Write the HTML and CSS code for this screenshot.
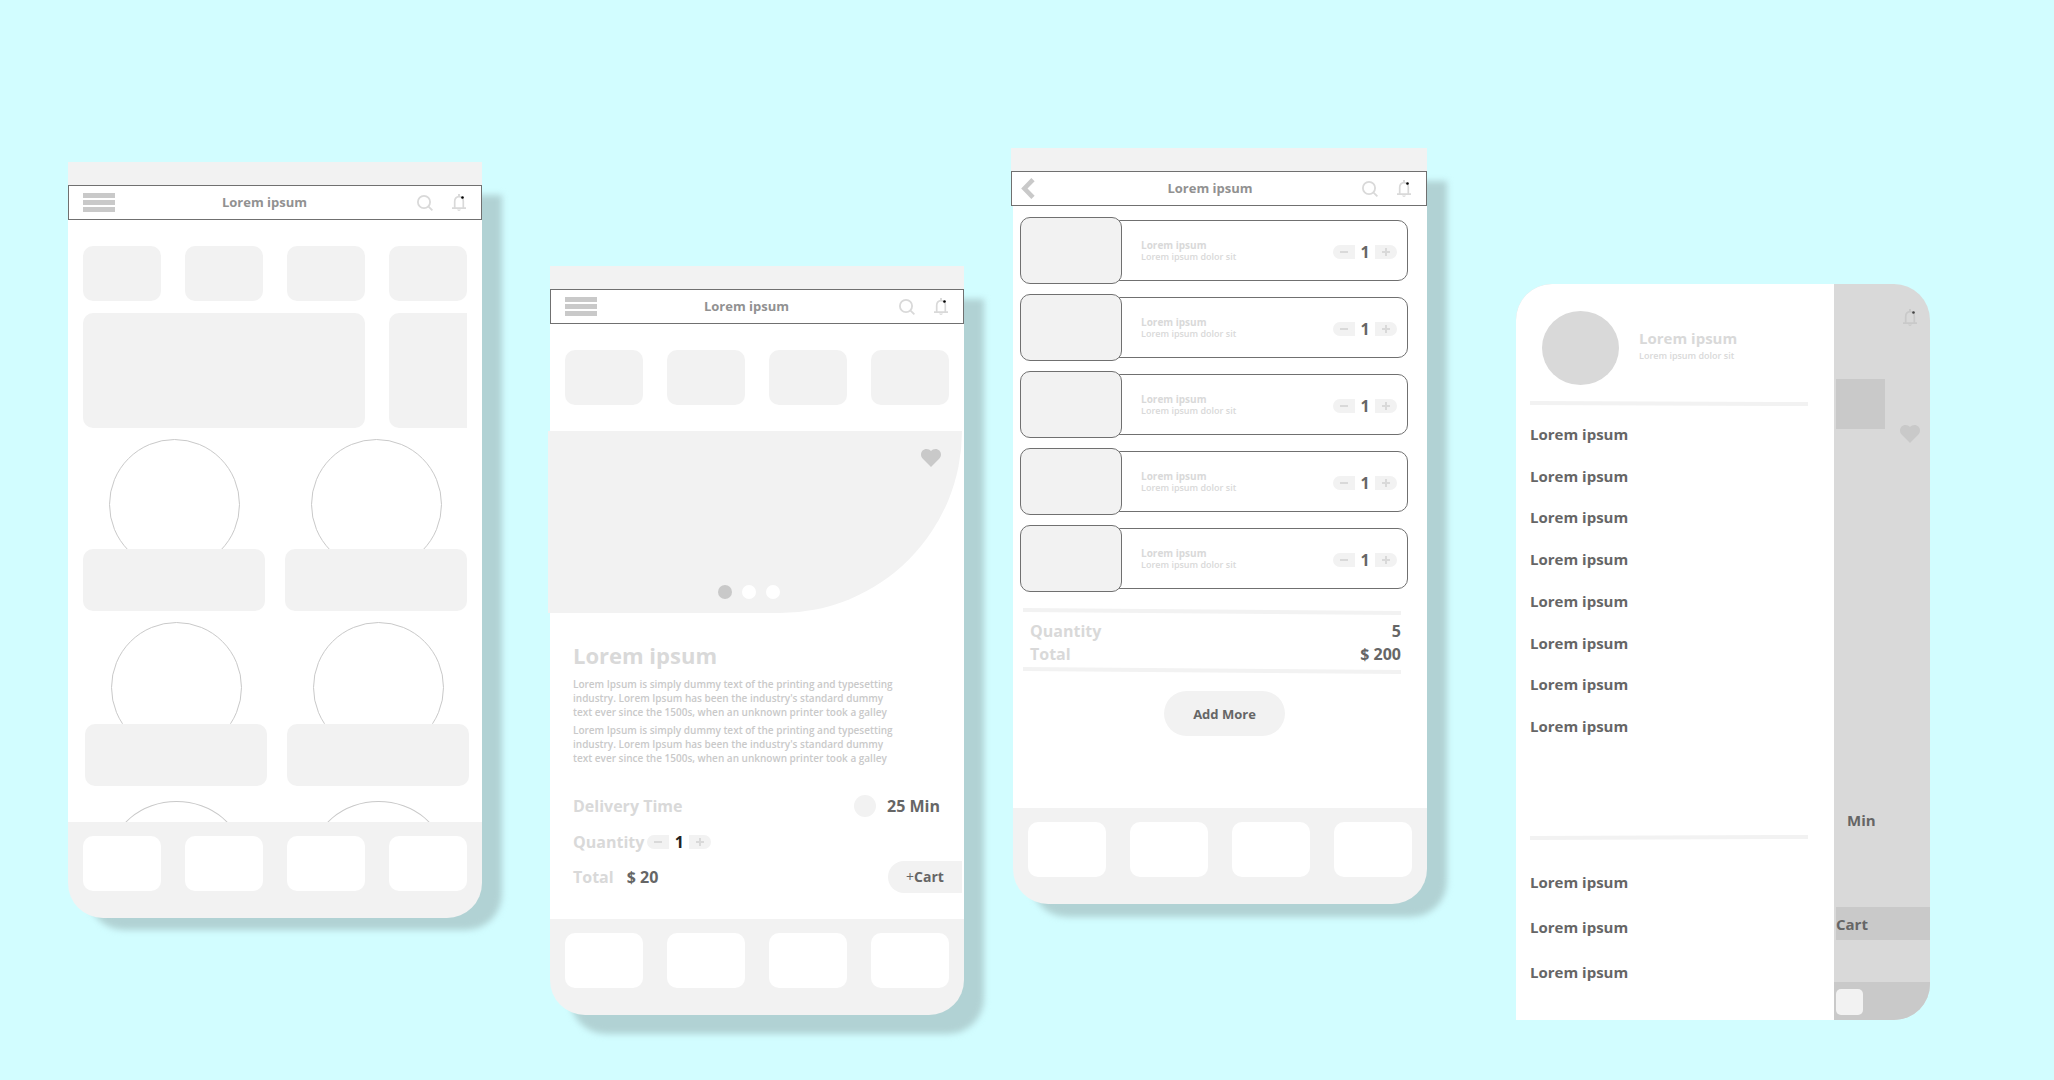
FILE: index.html
```html
<!DOCTYPE html>
<html lang="en">
<head>
<meta charset="utf-8">
<title>Food app wireframes</title>
<meta name="viewport" content="width=device-width, initial-scale=1">
<link rel="stylesheet" href="styles.css">
</head>
<body>
<svg class="defs" aria-hidden="true">
  <symbol id="menu" viewBox="0 0 32 19"><path fill="#c9c9c9" d="M0 0h32v5H0zM0 7h32v5H0zM0 14h32v5H0z"/></symbol>
  <symbol id="back" viewBox="0 0 14 21"><path fill="none" stroke="#c9c9c9" stroke-width="4.600" d="M12 1.700 3.400 10.500l8.600 8.800"/></symbol>
  <symbol id="search" viewBox="0 0 16 16"><g fill="none" stroke="#d9d9d9" stroke-width="1.8"><circle cx="7" cy="7" r="6.1"/><path d="m11.3 11.3 4.1 4.1"/></g></symbol>
  <symbol id="bell" viewBox="0 0 14 17"><path fill="none" stroke="#d9d9d9" stroke-width="1.7" d="M2.7 14V7.2C2.7 4.600 4.500 2.600 7 2.600s4.300 2 4.300 4.600V14M0 14.100h14"/><path fill="#d9d9d9" d="M6 0h2v2.500H6zM5 15.600h4c-.4.900-1.200 1.400-2 1.400s-1.600-.5-2-1.400z"/><circle cx="10.500" cy="3.500" r="1.300" fill="#000"/></symbol>
  <symbol id="bell-dim" viewBox="0 0 14 17"><path fill="none" stroke="#c9c9c9" stroke-width="1.7" d="M2.700 14V7.200C2.700 4.600 4.500 2.600 7 2.600s4.300 2 4.300 4.600V14M0 14.100h14"/><path fill="#c9c9c9" d="M6 0h2v2.500H6zM5 15.600h4c-.4.900-1.200 1.400-2 1.400s-1.600-.5-2-1.400z"/><circle cx="10.500" cy="3.500" r="1.300" fill="#444"/></symbol>
  <symbol id="heart" viewBox="0 0 20 18"><path fill="#c9c9c9" d="M10 18 1.800 9.800C.6 8.600 0 7.200 0 5.600 0 2.400 2.400 0 5.500 0 7.300 0 9 .8 10 2.100 11 .8 12.700 0 14.500 0 17.600 0 20 2.400 20 5.600c0 1.600-.6 3-1.800 4.200z"/></symbol>
  <symbol id="minus" viewBox="0 0 8 8"><path fill="#d9d9d9" d="M0 3h8v2H0z"/></symbol>
  <symbol id="plus" viewBox="0 0 8 8"><path fill="#d9d9d9" d="M0 3h8v2H0zM3 0h2v8H3z"/></symbol>
</svg>

<main class="board">
  <section class="phone phone-home" aria-label="Home">
    <div class="status"></div>
    <header class="appbar">
      <button class="icon-btn" aria-label="Menu"><svg width="32" height="19"><use href="#menu"/></svg></button>
      <h2 class="appbar-title">Lorem ipsum</h2>
      <button class="icon-btn search" aria-label="Search"><svg width="16" height="16"><use href="#search"/></svg></button>
      <button class="icon-btn" aria-label="Notifications"><svg width="14" height="17"><use href="#bell"/></svg></button>
    </header>
    <div class="screen">
      <div class="tiles"><span class="tile"></span><span class="tile"></span><span class="tile"></span><span class="tile"></span></div>
      <div class="tiles banners"><span class="banner"></span><span class="banner banner-cut"></span></div>
      <div class="dishes">
        <article class="dish"><div class="plate"></div><div class="caption"></div></article>
        <article class="dish"><div class="plate"></div><div class="caption"></div></article>
      </div>
      <div class="dishes dishes-low">
        <article class="dish"><div class="plate"></div><div class="caption"></div></article>
        <article class="dish"><div class="plate"></div><div class="caption"></div></article>
      </div>
      <div class="dishes dishes-peek">
        <div class="plate"></div>
        <div class="plate"></div>
      </div>
    </div>
    <nav class="tabs tiles" aria-label="Tabs"><a href="#" class="tile"></a><a href="#" class="tile"></a><a href="#" class="tile"></a><a href="#" class="tile"></a></nav>
  </section>

  <section class="phone phone-detail" aria-label="Product">
    <div class="status"></div>
    <header class="appbar">
      <button class="icon-btn" aria-label="Menu"><svg width="32" height="19"><use href="#menu"/></svg></button>
      <h2 class="appbar-title">Lorem ipsum</h2>
      <button class="icon-btn search" aria-label="Search"><svg width="16" height="16"><use href="#search"/></svg></button>
      <button class="icon-btn" aria-label="Notifications"><svg width="14" height="17"><use href="#bell"/></svg></button>
    </header>
    <div class="screen">
      <div class="tiles"><span class="tile"></span><span class="tile"></span><span class="tile"></span><span class="tile"></span></div>
      <div class="hero">
        <button class="icon-btn favourite" aria-label="Favourite"><svg width="20" height="18"><use href="#heart"/></svg></button>
        <div class="dots"><span class="dot dot-on"></span><span class="dot"></span><span class="dot"></span></div>
      </div>
      <div class="info">
        <h3 class="info-title">Lorem ipsum</h3>
        <p>Lorem Ipsum is simply dummy text of the printing and typesetting<br>industry. Lorem Ipsum has been the industry's standard dummy<br>text ever since the 1500s, when an unknown printer took a galley</p>
        <p>Lorem Ipsum is simply dummy text of the printing and typesetting<br>industry. Lorem Ipsum has been the industry's standard dummy<br>text ever since the 1500s, when an unknown printer took a galley</p>
        <div class="line line-time"><span class="label">Delivery Time</span><span class="clock"></span><span class="value">25 Min</span></div>
        <div class="line line-qty"><span class="label">Quantity</span>
          <div class="stepper stepper-dark"><button aria-label="Less"><svg width="8" height="8"><use href="#minus"/></svg></button><output>1</output><button aria-label="More"><svg width="8" height="8"><use href="#plus"/></svg></button></div>
        </div>
        <div class="line line-total"><span class="label">Total</span><span class="value">$ 20</span><button class="cart"><span class="cart-plus">+</span>Cart</button></div>
      </div>
    </div>
    <nav class="tabs tiles" aria-label="Tabs"><a href="#" class="tile"></a><a href="#" class="tile"></a><a href="#" class="tile"></a><a href="#" class="tile"></a></nav>
  </section>

  <section class="phone phone-cart" aria-label="Cart">
    <div class="status"></div>
    <header class="appbar">
      <button class="icon-btn back" aria-label="Back"><svg width="14" height="21"><use href="#back"/></svg></button>
      <h2 class="appbar-title">Lorem ipsum</h2>
      <button class="icon-btn search" aria-label="Search"><svg width="16" height="16"><use href="#search"/></svg></button>
      <button class="icon-btn" aria-label="Notifications"><svg width="14" height="17"><use href="#bell"/></svg></button>
    </header>
    <div class="screen">
      <ul class="items">
        <li class="item"><div class="thumb"></div><div class="item-card"><div class="item-text"><h3>Lorem ipsum</h3><p>Lorem ipsum dolor sit</p></div><div class="stepper"><button aria-label="Less"><svg width="8" height="8"><use href="#minus"/></svg></button><output>1</output><button aria-label="More"><svg width="8" height="8"><use href="#plus"/></svg></button></div></div></li>
        <li class="item"><div class="thumb"></div><div class="item-card"><div class="item-text"><h3>Lorem ipsum</h3><p>Lorem ipsum dolor sit</p></div><div class="stepper"><button aria-label="Less"><svg width="8" height="8"><use href="#minus"/></svg></button><output>1</output><button aria-label="More"><svg width="8" height="8"><use href="#plus"/></svg></button></div></div></li>
        <li class="item"><div class="thumb"></div><div class="item-card"><div class="item-text"><h3>Lorem ipsum</h3><p>Lorem ipsum dolor sit</p></div><div class="stepper"><button aria-label="Less"><svg width="8" height="8"><use href="#minus"/></svg></button><output>1</output><button aria-label="More"><svg width="8" height="8"><use href="#plus"/></svg></button></div></div></li>
        <li class="item"><div class="thumb"></div><div class="item-card"><div class="item-text"><h3>Lorem ipsum</h3><p>Lorem ipsum dolor sit</p></div><div class="stepper"><button aria-label="Less"><svg width="8" height="8"><use href="#minus"/></svg></button><output>1</output><button aria-label="More"><svg width="8" height="8"><use href="#plus"/></svg></button></div></div></li>
        <li class="item"><div class="thumb"></div><div class="item-card"><div class="item-text"><h3>Lorem ipsum</h3><p>Lorem ipsum dolor sit</p></div><div class="stepper"><button aria-label="Less"><svg width="8" height="8"><use href="#minus"/></svg></button><output>1</output><button aria-label="More"><svg width="8" height="8"><use href="#plus"/></svg></button></div></div></li>
      </ul>
      <div class="summary">
        <hr class="rule rule-steep">
        <div class="sums">
          <div class="sum"><span class="label">Quantity</span><span class="value">5</span></div>
          <div class="sum"><span class="label">Total</span><span class="value">$ 200</span></div>
        </div>
        <hr class="rule rule-steep">
      </div>
      <div class="actions"><button class="add-more">Add More</button></div>
    </div>
    <nav class="tabs tiles" aria-label="Tabs"><a href="#" class="tile"></a><a href="#" class="tile"></a><a href="#" class="tile"></a><a href="#" class="tile"></a></nav>
  </section>

  <section class="drawer-phone" aria-label="Side menu">
    <aside class="drawer">
      <div class="profile"><div class="avatar"></div><div class="profile-text"><h3>Lorem ipsum</h3><p>Lorem ipsum dolor sit</p></div></div>
      <hr class="rule">
      <nav class="menu menu-main" aria-label="Main">
        <a href="#">Lorem ipsum</a><a href="#">Lorem ipsum</a><a href="#">Lorem ipsum</a><a href="#">Lorem ipsum</a><a href="#">Lorem ipsum</a><a href="#">Lorem ipsum</a><a href="#">Lorem ipsum</a><a href="#">Lorem ipsum</a>
      </nav>
      <hr class="rule rule-up">
      <nav class="menu menu-more" aria-label="More">
        <a href="#">Lorem ipsum</a><a href="#">Lorem ipsum</a><a href="#">Lorem ipsum</a>
      </nav>
    </aside>
    <div class="behind">
      <svg class="behind-bell" width="14" height="17"><use href="#bell-dim"/></svg>
      <div class="behind-row"><span class="behind-tile"></span><svg class="behind-heart" width="20" height="18"><use href="#heart"/></svg></div>
      <span class="behind-min">Min</span>
      <span class="behind-cart">Cart</span>
      <div class="behind-tabs"><span class="behind-tab"></span></div>
    </div>
  </section>
</main>
</body>
</html>
```
FILE: styles.css
```css
:root {
  --page: #d2fdff;
  --fill: #f2f2f2;
  --soft: #d9d9d9;
  --mid: #c9c9c9;
  --ink: #666;
  --line: #707070;
}

*, *::before { box-sizing: border-box; }

body {
  margin: 0;
  min-height: 100vh;
  background: var(--page);
  color: var(--ink);
  font: bold 16px/22px "Open Sans", "Noto Sans", sans-serif;
}

h2, h3, p, ul { margin: 0; padding: 0; font: inherit; }
ul { list-style: none; }
svg { display: block; flex: none; }
a { color: inherit; text-decoration: none; }
button { margin: 0; padding: 0; border: 0; background: none; color: inherit; font: inherit; cursor: pointer; }
.defs { position: absolute; width: 0; height: 0; }

/* Board: phones and the gutters between them share the window width */
.board {
  display: grid;
  grid-template-columns: 68fr 414fr 68fr 414fr 47fr 416fr 89fr 414fr 124fr;
  align-items: start;
}
.phone-home { grid-column: 2; margin-top: 162px; --drop: -12px; }
.phone-detail { grid-column: 4; margin-top: 266px; --drop: -19px; }
.phone-cart { grid-column: 6; margin-top: 148px; --drop: -13px; }
.drawer-phone { grid-column: 8; margin-top: 284px; }

.phone { position: relative; isolation: isolate; }
.phone::before {
  content: "";
  position: absolute;
  z-index: -1;
  inset: 33px -20px var(--drop) 20px;
  border-radius: 0 0 36px 36px;
  background: #b1d2d4;
  filter: blur(3px);
}

.status { height: 23px; background: var(--fill); }
.appbar {
  display: flex;
  align-items: center;
  height: 35px;
  padding: 0 15px 0 14px;
  border: 1px solid var(--line);
  background: #fff;
}
.appbar-title { flex: 1; padding-bottom: 2px; text-align: center; color: #919191; font-size: 13px; line-height: 18px; }
.icon-btn { display: flex; flex: none; }
.search { padding: 0 19px 0 3px; }
.back { width: 40px; }
.phone-cart .appbar { padding-left: 9px; }

.screen { background: #fff; }
.tiles { display: grid; grid-template-columns: repeat(4, 1fr); gap: 24px; padding: 0 15px; }
.tile { height: 55px; border-radius: 10px; background: var(--fill); }
.tabs { height: 96px; padding-top: 14px; border-radius: 0 0 35px 35px; background: var(--fill); }
.tabs .tile { background: #fff; }

/* Home */
.phone-home .screen { padding-top: 26px; }
.banners { margin-top: 12px; }
.banner { grid-column: span 3; height: 115px; border-radius: 10px; background: var(--fill); }
.banner-cut { grid-column: span 1; border-radius: 10px 0 0 10px; }
.dishes { display: grid; grid-template-columns: 1fr 1fr; gap: 20px; padding: 11px 15px 0; }
.plate { display: flex; justify-content: center; height: 110px; overflow: hidden; }
.plate::before { content: ""; flex: none; width: 131px; height: 131px; border: 1px solid var(--mid); border-radius: 50%; }
.caption { height: 62px; border-radius: 10px; background: var(--fill); }
.dishes-low { padding: 11px 13px 0 17px; }
.dishes-low .plate { height: 102px; }
.dishes-peek { padding: 15px 13px 0 17px; }
.dishes-peek .plate { height: 21px; }
.dishes-peek .plate::before { height: 112px; }

/* Product */
.phone-detail .screen { padding-top: 26px; }
.hero {
  display: flex;
  flex-direction: column;
  justify-content: space-between;
  align-items: center;
  height: 182px;
  margin: 26px 2px 0 -2px;
  padding: 18px 12px 14px 0;
  border-bottom-right-radius: 182px;
  background: var(--fill);
}
.favourite { align-self: flex-end; margin-right: 9px; }
.dots { display: flex; gap: 10px; }
.dot { width: 14px; height: 14px; border-radius: 50%; background: #fff; }
.dot-on { background: var(--mid); }
.info { padding: 26px 2px 26px 23px; color: var(--mid); }
.info-title { color: var(--soft); font-size: 22px; line-height: 32px; margin-bottom: 6px; }
.info p { font-size: 10px; font-weight: 600; line-height: 14px; margin-bottom: 4px; }
.label { color: var(--soft); }
.value { color: var(--ink); }
.line { display: flex; align-items: center; height: 22px; }
.line-time { margin-top: 30px; padding-right: 22px; }
.clock { width: 22px; height: 22px; margin: 0 11px 0 auto; border-radius: 50%; background: var(--fill); }
.line-qty { margin-top: 14px; gap: 3px; }
.line-total { height: 32px; margin-top: 8px; gap: 13px; }
.cart { width: 74px; height: 32px; margin-left: auto; border-radius: 16px 0 0 16px; background: var(--fill); color: var(--ink); font-size: 14px; }
.cart-plus { font-weight: 400; }

.stepper { display: flex; align-items: center; line-height: 14px; }
.stepper button { display: flex; align-items: center; justify-content: center; width: 22px; height: 14px; background: var(--fill); }
.stepper button:first-child { border-radius: 7px 0 0 7px; }
.stepper button:last-child { border-radius: 0 7px 7px 0; }
.stepper output { width: 20px; text-align: center; }
.stepper-dark output { color: #222; }

/* Cart */
.phone-cart .screen, .phone-cart .tabs { margin-left: 2px; }
.items { display: grid; gap: 10px; padding: 11px 19px 0 7px; }
.item { display: flex; align-items: center; }
.thumb { z-index: 1; flex: none; width: 102px; height: 67px; border: 1px solid var(--line); border-radius: 10px; background: var(--fill); }
.item-card {
  display: flex;
  flex: 1;
  align-items: center;
  justify-content: space-between;
  height: 61px;
  margin-left: -12px;
  padding: 2px 10px 0 30px;
  border: 1px solid var(--line);
  border-radius: 10px;
}
.item-text { padding-bottom: 2px; color: var(--soft); }
.item-text h3 { font-size: 10px; line-height: 12px; }
.item-text p, .profile-text p { font-size: 9px; font-weight: 600; line-height: 12px; }
.rule { height: 5px; margin: 0; border: 0; background: var(--fill); clip-path: polygon(0 0, 100% 1px, 100% 100%, 0 4px); }
.rule-up { clip-path: polygon(0 1px, 100% 0, 100% 4px, 0 100%); }
.rule-steep { height: 7px; clip-path: polygon(0 0, 100% 3px, 100% 100%, 0 4px); }
.summary { padding: 16px 26px 0 10px; }
.sums { padding: 5px 0 1px 7px; }
.sum { display: flex; justify-content: space-between; line-height: 23px; }
.actions { display: flex; justify-content: center; padding: 17px 0 72px 9px; }
.add-more { width: 121px; height: 45px; border-radius: 23px; background: var(--fill); font-size: 13px; }

/* Side menu */
.drawer-phone {
  display: grid;
  grid-template-columns: 318fr 96fr;
  min-height: 736px;
  border-radius: 36px 36px 36px 0;
  overflow: hidden;
  background: var(--soft);
  font-size: 15px;
}
.drawer { background: #fff; padding: 27px 26px 0 14px; }
.profile { display: flex; gap: 20px; padding-left: 12px; margin-bottom: 16px; }
.avatar { width: 77px; height: 74px; border-radius: 50%; background: var(--soft); }
.profile-text { padding-top: 16px; color: var(--soft); }
.profile-text p { line-height: 14px; }
.menu { display: flex; flex-direction: column; justify-content: space-between; }
.menu-main { min-height: 314px; margin: 17px 0 98px; }
.menu-more { min-height: 112px; margin-top: 31px; }
.behind { display: flex; flex-direction: column; align-items: flex-start; padding-top: 25px; }
.behind-bell { margin: 0 13px 0 auto; }
.behind-row { display: flex; justify-content: space-between; align-self: stretch; padding: 53px 10px 0 2px; }
.behind-tile { width: 49px; height: 50px; background: var(--mid); }
.behind-heart { margin-top: 46px; }
.behind-min { margin: 366px 0 0 13px; }
.behind-cart { align-self: stretch; height: 33px; margin: auto 0 42px 2px; background: var(--mid); line-height: 35px; }
.behind-tabs { align-self: stretch; height: 38px; padding: 7px 2px; background: var(--mid); }
.behind-tab { display: block; width: 27px; height: 26px; border-radius: 5px; background: var(--fill); }

@media (max-width: 1500px) {
  .board { grid-template-columns: repeat(auto-fill, minmax(360px, 414px)); gap: 68px; padding: 48px; }
  .phone, .drawer-phone { grid-column: auto; margin-top: 0; }
}
```
